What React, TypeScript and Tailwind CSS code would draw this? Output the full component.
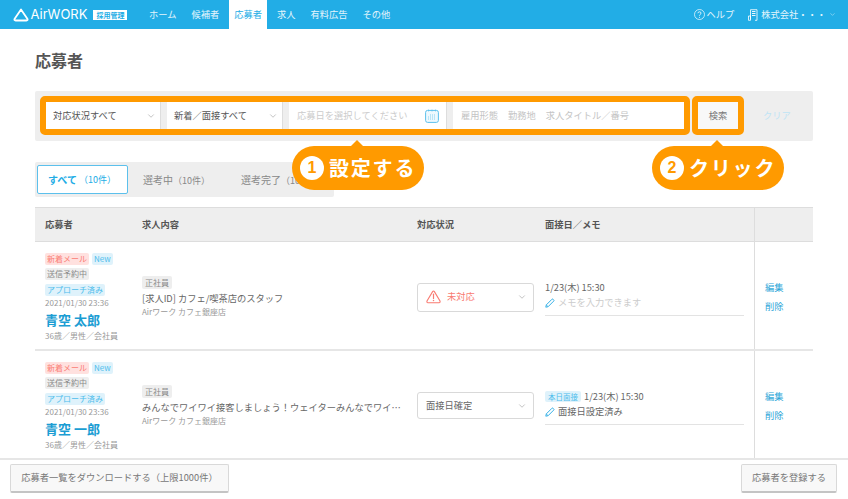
import React from 'react';
import { ChevronDown } from 'lucide-react';

const FONT = "font-['Noto_Sans_CJK_JP','Noto_Sans',sans-serif]";

const NAV = ['ホーム', '候補者', '応募者', '求人', '有料広告', 'その他'];

const Tag = ({ color, children }: { color: 'red' | 'blue' | 'gray'; children: React.ReactNode }) => {
  const cls = {
    red: 'bg-[#ffe1df] text-[#fb7d74]',
    blue: 'bg-[#dff2fb] text-[#4dbdec]',
    gray: 'bg-[#eeeeee] text-[#8a8a8a]',
  }[color];
  return <span className={`block h-3 px-0.5 rounded-[2px] text-[8px] leading-3 whitespace-nowrap ${cls}`}>{children}</span>;
};

const PencilIcon = () => (
  <svg width="10" height="10" viewBox="0 0 10 10" className="shrink-0">
    <path d="M0.8 9.2 L1.3 6.9 L6.9 1.3 Q7.5 0.7 8.1 1.3 L8.7 1.9 Q9.3 2.5 8.7 3.1 L3.1 8.7 Z" fill="none" stroke="#35b0e6" strokeWidth="1" strokeLinejoin="round" />
    <path d="M1.3 6.9 L3.1 8.7" stroke="#35b0e6" strokeWidth="0.8" />
  </svg>
);

const WarnIcon = () => (
  <svg width="15" height="14" viewBox="0 0 15 14" className="shrink-0">
    <path d="M7.5 1 Q8 1 8.4 1.6 L14 11 Q14.5 12.5 13 12.7 L2 12.7 Q0.5 12.5 1 11 L6.6 1.6 Q7 1 7.5 1 Z" fill="none" stroke="#f97b72" strokeWidth="1.1" />
    <path d="M7.5 4.2 V8.4" stroke="#f97b72" strokeWidth="1.2" strokeLinecap="round" />
    <circle cx="7.5" cy="10.4" r="0.75" fill="#f97b72" />
  </svg>
);

const Callout = ({ num, label, className }: { num: string; label: string; className: string }) => (
  <div className={`absolute top-[146px] w-[132px] h-11 rounded-[22px] bg-[#ff9a00] flex items-center pl-2 gap-[5px] ${className}`}>
    <div className="absolute -top-[6px] left-[59px] w-0 h-0 border-x-[6px] border-x-transparent border-b-[6px] border-b-[#ff9a00]" />
    <span className="w-6 h-6 rounded-full bg-white text-[#ff9a00] text-[16px] font-bold leading-6 text-center font-['Liberation_Sans',sans-serif]">{num}</span>
    <span className="text-white text-[20px] font-bold tracking-[1.8px] leading-none whitespace-nowrap">{label}</span>
  </div>
);

const Row = ({
  name, title, status, memoTag, memo,
}: {
  name: string; title: string; status: React.ReactNode; memoTag?: boolean; memo: React.ReactNode;
}) => (
  <div className="flex h-[109px] border-b-2 border-[#e6e6e6]">
    <div className="w-[107px] pl-[10px] pt-[11px] flex flex-col items-start">
      <div className="flex gap-[3px]">
        <Tag color="red">新着メール</Tag>
        <Tag color="blue">New</Tag>
      </div>
      <div className="mt-[3px]"><Tag color="gray">送信予約中</Tag></div>
      <div className="mt-1"><Tag color="blue">アプローチ済み</Tag></div>
      <div className="text-[8px] leading-3 text-[#999] mt-[1px] whitespace-nowrap">2021/01/30 23:36</div>
      <div className="text-[13px] leading-[18px] font-bold text-[#1b9dd3] mt-[2px] whitespace-nowrap">{name}</div>
      <div className="text-[8px] leading-3 text-[#999] mt-[1px] whitespace-nowrap">36歳／男性／会社員</div>
    </div>
    <div className="w-[275px] pt-[2px] flex flex-col justify-center items-start pr-2">
      <span className="block h-[13px] px-[3px] rounded-[2px] bg-[#eeeeee] text-[#8a8a8a] text-[8px] leading-[13px]">正社員</span>
      <div className="text-[9.25px] leading-[14px] text-[#666] mt-[2px] w-[259px] truncate">{title}</div>
      <div className="text-[8px] leading-3 text-[#999] mt-[1px]">Airワーク カフェ銀座店</div>
    </div>
    <div className="w-[128px] flex items-center">{status}</div>
    <div className="w-[209px] flex items-center">
      <div className="w-[199px] border-b border-[#e3e3e3] pb-[4px] mt-[5px]">
        <div className="flex items-center gap-[3px] h-[14px]">
          {memoTag && <span className="block h-[11px] px-[3px] rounded-[2px] bg-[#dff2fb] text-[#4dbdec] text-[7.5px] leading-[11px]">本日面接</span>}
          <span className="text-[9.25px] text-[#666] whitespace-nowrap">1/23(木) 15:30</span>
        </div>
        <div className="flex items-center gap-[3px] h-[15px] mt-[1px]">
          <PencilIcon />
          {memo}
        </div>
      </div>
    </div>
    <div className="flex-1 border-l border-[#dddddd] pl-[10px] pt-[2px] flex flex-col justify-center gap-[7px]">
      <span className="text-[9.25px] leading-3 text-[#2ea6d8]">編集</span>
      <span className="text-[9.25px] leading-3 text-[#2ea6d8]">削除</span>
    </div>
  </div>
);

export default function App() {
  return (
    <div className={`relative w-[848px] h-[499px] overflow-hidden flex flex-col bg-white ${FONT}`}>
      {/* Header */}
      <header className="h-[29px] shrink-0 bg-[#22ade6] flex items-center pl-[13px] pr-[12px] text-white">
        <svg width="16" height="14" viewBox="0 0 16 14" className="shrink-0">
          <path d="M8 1.5 L14.5 11 Q15 12.5 13.5 12.5 L2.5 12.5 Q1 12.5 1.5 11 Z" fill="none" stroke="white" strokeWidth="1.8" strokeLinejoin="round" />
        </svg>
        <span className="ml-[1.5px] text-[13px] leading-none font-['Inter',sans-serif] font-normal">AirWORK</span>
        <span className="ml-[6px] h-[10px] w-[34px] bg-white text-[#22ade6] text-[7px] font-bold leading-[10px] text-center whitespace-nowrap">採用管理</span>
        <nav className="flex h-full ml-[16px] text-[9.25px]">
          {NAV.map((n) => (
            <div
              key={n}
              className={`h-full flex items-center px-[5.5px] mr-[4px] ${n === '応募者' ? 'bg-white text-[#22ade6]' : 'text-[#e4f5fc]'}`}
            >
              {n}
            </div>
          ))}
        </nav>
        <div className="ml-auto flex items-center text-[9.25px] text-[#e4f5fc]">
          <svg width="11" height="11" viewBox="0 0 11 11" className="mr-[2px]">
            <circle cx="5.5" cy="5.5" r="5" fill="none" stroke="white" strokeWidth="0.7" />
            <path d="M3.9 4.2 Q4 2.8 5.5 2.8 Q7 2.8 7 4.1 Q7 4.9 6 5.6 Q5.5 6 5.5 6.8" fill="none" stroke="white" strokeWidth="0.8" />
            <circle cx="5.5" cy="8.3" r="0.5" fill="white" />
          </svg>
          <span>ヘルプ</span>
          <svg width="10" height="12" viewBox="0 0 10 12" className="ml-[14px] mr-[3px]">
            <path d="M2.5 10.5 V0.7 H9 V11.3 M0.5 11.3 H2.5 V7 H0.5 V11.3 M9 11.3 H7" fill="none" stroke="white" strokeWidth="0.8" />
            <path d="M4 2.5 H7.5 M4 4.5 H7.5 M4 6.5 H7.5" stroke="white" strokeWidth="0.9" />
          </svg>
          <span className="whitespace-nowrap">株式会社・・・</span>
          <ChevronDown size={7} strokeWidth={1.5} className="ml-[3px]" />
        </div>
      </header>

      {/* Main */}
      <main className="flex-1 min-h-0 px-[35px] overflow-hidden">
        <h1 className="mt-[20px] h-[22px] text-[16px] leading-[22px] font-bold text-[#555]">応募者</h1>

        {/* Filter bar */}
        <div className="mt-[20px] h-[50px] bg-[#eeeeee] rounded-[2px] pl-[5px] pt-[5px] flex items-start">
          <div className="w-[650px] h-[39px] border-[6px] border-[#ff9a00] rounded-[5px] bg-[#eeeeee] flex gap-[6px] text-[9.25px]">
            <div className="w-[115px] bg-white flex items-center justify-between pl-[2px] pr-1 text-[#555] border-r border-[#dddddd]">
              <span className="pl-[5px] whitespace-nowrap">対応状況すべて</span>
              <ChevronDown size={10} strokeWidth={1.2} className="text-[#888]" />
            </div>
            <div className="w-[116px] bg-white flex items-center justify-between pl-[2px] pr-1 text-[#555] border-r border-[#dddddd]">
              <span className="pl-[5px] whitespace-nowrap">新着／面接すべて</span>
              <ChevronDown size={10} strokeWidth={1.2} className="text-[#888]" />
            </div>
            <div className="w-[158px] bg-white flex items-center pl-2 pr-[7px] text-[#cccccc] border-r border-[#dddddd]">
              <span className="whitespace-nowrap">応募日を選択してください</span>
              <svg width="14" height="14" viewBox="0 0 14 14" className="ml-auto">
                <rect x="0.6" y="1.4" width="12.8" height="12" rx="2" fill="#eef9fe" stroke="#5cc0ec" strokeWidth="1" />
                <path d="M3.5 0.5V2.5M7 0.5V2.5M10.5 0.5V2.5" stroke="#5cc0ec" strokeWidth="0.6" />
                <path d="M5 6H11M3 8H11M3 10H11" stroke="#5cc0ec" strokeWidth="0.8" strokeDasharray="0.9 1.1" />
              </svg>
            </div>
            <div className="flex-1 bg-white flex items-center pl-2 gap-[10px] text-[#c4c4c4] whitespace-nowrap">
              <span>雇用形態</span>
              <span>勤務地</span>
              <span>求人タイトル／番号</span>
            </div>
          </div>
          <div className="ml-[2px] w-[52px] h-[39px] border-[6px] border-[#ff9a00] rounded-[5px] bg-[#f8f8f8] text-[9.25px] text-[#777] flex items-center justify-center">
            検索
          </div>
          <div className="ml-[19px] h-[39px] flex items-center text-[9.25px] text-[#bfe4f5]">クリア</div>
        </div>

        {/* Tabs */}
        <div className="mt-[21px] w-[299px] h-[35px] bg-[#eeeeee] rounded-[2px] flex items-center pl-[2px] text-[10px] text-[#888] whitespace-nowrap">
          <div className="w-[91px] h-[29px] bg-white border border-[#5cc0ec] rounded-[2px] flex items-center pl-[10px] text-[#22ade6]">
            <span className="font-bold">すべて</span>
            <span className="text-[9px] ml-[2px]">（10件）</span>
          </div>
          <div className="ml-[15px]">
            選考中<span className="text-[9px]">（10件）</span>
          </div>
          <div className="ml-[31px]">
            選考完了<span className="text-[9px]">（10件）</span>
          </div>
        </div>

        {/* Table */}
        <div className="mt-[10px]">
          <div className="flex h-[35px] bg-[#eeeeee] border-y border-[#dddddd] text-[9.25px] font-bold text-[#555] items-center">
            <div className="w-[107px] pl-[10px]">応募者</div>
            <div className="w-[275px]">求人内容</div>
            <div className="w-[128px]">対応状況</div>
            <div className="w-[209px]">面接日／メモ</div>
            <div className="flex-1 self-stretch border-l border-[#dddddd]" />
          </div>
          <Row
            name="青空 太郎"
            title="[求人ID] カフェ/喫茶店のスタッフ"
            status={
              <div className="w-[117px] h-[29px] mt-[3px] border border-[#d9d9d9] rounded-[3px] flex items-center pl-2 pr-[6px] text-[9.25px] text-[#f97b72]">
                <WarnIcon />
                <span className="ml-[6px]">未対応</span>
                <ChevronDown size={10} strokeWidth={1.2} className="ml-auto text-[#888]" />
              </div>
            }
            memo={<span className="text-[9.25px] text-[#cccccc] whitespace-nowrap">メモを入力できます</span>}
          />
          <Row
            name="青空 一郎"
            title="みんなでワイワイ接客しましょう！ウェイターみんなでワイワイ接客しましょう！"
            memoTag
            status={
              <div className="w-[117px] h-[27px] mt-[2px] border border-[#d9d9d9] rounded-[3px] flex items-center pl-2 pr-[6px] text-[9.25px] text-[#666]">
                <span>面接日確定</span>
                <ChevronDown size={10} strokeWidth={1.2} className="ml-auto text-[#888]" />
              </div>
            }
            memo={<span className="text-[9.25px] text-[#666] whitespace-nowrap">面接日設定済み</span>}
          />
        </div>
      </main>

      {/* Footer */}
      <footer className="h-[41px] shrink-0 bg-white border-t-2 border-[#e6e6e6] flex items-start justify-between pl-[10px] pr-[11px] pt-[4px]">
        <button className="w-[219px] h-[29px] bg-[#f8f8f8] border border-[#d9d9d9] border-b-2 border-b-[#c4c4c4] rounded-[2px] text-[9.25px] text-[#777] whitespace-nowrap">
          応募者一覧をダウンロードする（上限1000件）
        </button>
        <button className="w-[96px] h-[29px] bg-[#f8f8f8] border border-[#d9d9d9] border-b-2 border-b-[#c4c4c4] rounded-[2px] text-[9.25px] text-[#777] whitespace-nowrap">
          応募者を登録する
        </button>
      </footer>

      {/* Annotations */}
      <Callout num="1" label="設定する" className="left-[292px]" />
      <Callout num="2" label="クリック" className="left-[652px]" />
    </div>
  );
}
